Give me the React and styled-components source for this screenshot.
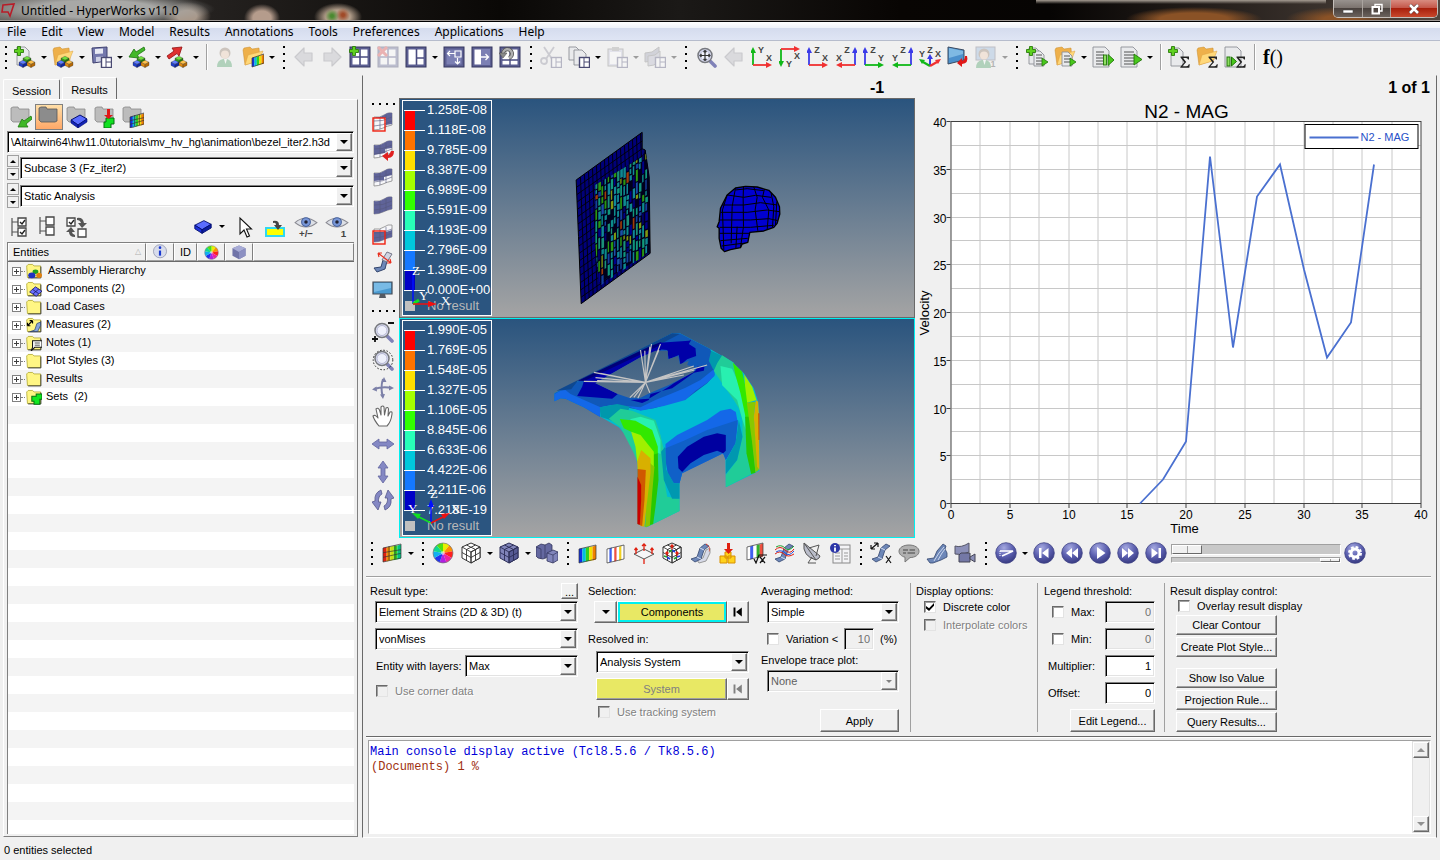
import React from "react";
import styled, { createGlobalStyle, css } from "styled-components";

const UI_FONT = `"Liberation Sans", Arial, sans-serif`;
const FACE = "#f0f0f0";

const GlobalStyle = createGlobalStyle`
  * { box-sizing: border-box; }
  body { margin: 0; background: ${FACE}; color: #000; font: 11px/14px ${UI_FONT}; }
  button, input, select { font: inherit; color: inherit; margin: 0; padding: 0; }
  ul { list-style: none; margin: 0; padding: 0; }
`;

/* ---------- shared bevels ---------- */
const raised = css`
  border: 1px solid;
  border-color: #fff #696969 #696969 #fff;
  box-shadow: inset -1px -1px 0 #a0a0a0;
`;
const sunken = css`
  border: 1px solid;
  border-color: #808080 #fff #fff #808080;
  box-shadow: inset 1px 1px 0 #000, inset -1px -1px 0 #e3e3e3;
`;

/* ---------- frame ---------- */
const Window = styled.div`
  display: flex;
  flex-direction: column;
  min-height: 100vh;
  background: ${FACE};
`;
const TitleBar = styled.header`
  display: flex;
  align-items: flex-start;
  height: 22px;
  padding: 2px 2px 0 1px;
  border-bottom: 1px solid #000;
  box-shadow: inset 0 -1px 0 #a09a96;
  background:
    radial-gradient(ellipse 120px 17px at 95px 9px, #a8a8a6 50%, transparent 100%),
    radial-gradient(ellipse 24px 14px at 187px 16px, #a8988a 40%, transparent 100%),
    radial-gradient(ellipse 18px 14px at 262px 18px, #b59c8c 50%, transparent 100%),
    radial-gradient(ellipse 7px 7px at 332px 16px, #4a8a30 20%, transparent 100%),
    radial-gradient(ellipse 7px 7px at 343px 15px, #a04a28 20%, transparent 100%),
    radial-gradient(ellipse 24px 14px at 338px 17px, #b5a08c 50%, transparent 100%),
    linear-gradient(#a59c92, transparent 4px) 1036px 0 / 290px 8px no-repeat,
    radial-gradient(ellipse 68px 12px at 1194px 19px, #8a5226 50%, transparent 100%),
    radial-gradient(ellipse 54px 12px at 1340px 19px, #8a5226 30%, transparent 100%),
    linear-gradient(90deg, #6a6864 0, #24211f 210px, #0a0806 500px, #1b1917 680px, #080503 900px, #060403 1050px, #2c2521 1250px, #51473f 100%);
`;
const AppTitle = styled.h1`
  margin: 0 0 0 4px;
  font: 12px/17px "Noto Sans", "Open Sans", sans-serif;
  flex: 1;
`;
const Caption = styled.div`
  display: flex;
  margin-top: -2px;
  border: 1px solid #c5bfba;
  border-top: 0;
  border-radius: 0 0 5px 5px;
  overflow: hidden;
`;
const CaptionButton = styled.button`
  width: ${(p) => (p.$close ? 47 : 28)}px;
  height: 17px;
  border: 0;
  border-left: ${(p) => (p.$first ? "0" : "1px solid #aaa49f")};
  display: grid;
  place-items: center;
  background: ${(p) =>
    p.$close
      ? "linear-gradient(#d88c80, #c4584a 45%, #a8200c 50%, #c8482c)"
      : "linear-gradient(#98928e, #7c746f 45%, #4a423e 50%, #6b625c)"};
`;
const MenuBar = styled.nav`
  display: flex;
  gap: 15px;
  height: 19px;
  padding: 0 7px;
  border-bottom: 1px solid #b6bccc;
  background: linear-gradient(#fff, #eef1f8 35%, #d5dcee 36%, #dfe5f4);
`;
const MenuLink = styled.a`
  color: #000;
  text-decoration: none;
  font: 12px/19px "Noto Sans", "Open Sans", sans-serif;
`;
const ToolBar = styled.div`
  display: flex;
  align-items: center;
  height: ${(p) => p.$h || 32}px;
  padding-left: ${(p) => p.$in || 0}px;
  overflow: hidden;
`;
const Grip = styled.span`
  flex: none;
  width: ${(p) => (p.$first ? 11 : 13)}px;
  height: 24px;
  background: repeating-linear-gradient(#000 0 2px, transparent 2px 7px) center / 2px 23px no-repeat;
`;
const HGrip = styled.span`
  width: 26px;
  height: ${(p) => p.$h}px;
  background: repeating-linear-gradient(90deg, #000 0 2px, transparent 2px 7px) center / 23px 2px no-repeat;
`;
const Divider = styled.span`
  flex: none;
  width: 10px;
  height: 26px;
  background: linear-gradient(90deg, #a0a0a0 1px, #fff 1px) 5px 0 / 2px 100% no-repeat;
`;
const ToolButton = styled.button`
  flex: none;
  width: 28px;
  height: 28px;
  border: 0;
  background: none;
  display: grid;
  place-items: center;
  opacity: ${(p) => (p.disabled ? 0.35 : 1)};
`;
const DropButton = styled.button`
  flex: none;
  width: 10px;
  height: 24px;
  border: 0;
  background: none;
  display: grid;
  place-items: center;
  opacity: ${(p) => (p.disabled ? 0.35 : 1)};
`;
const Caret = styled.span`
  width: 0;
  height: 0;
  border: ${(p) => p.$s || 3}px solid transparent;
  border-top-color: ${(p) => (p.$up ? "transparent" : p.$c || "#000")};
  border-bottom-color: ${(p) => (p.$up ? p.$c || "#000" : "transparent")};
  border-top-width: ${(p) => (p.$up ? 0 : p.$s || 3)}px;
  border-bottom-width: ${(p) => (p.$up ? p.$s || 3 : 0)}px;
`;
const FunctionMark = styled.span`
  font: 20px/24px "Liberation Serif", serif;
  white-space: nowrap;
  & > b { font-weight: bold; }
`;
const IconSvg = styled.svg`
  display: block;
  width: ${(p) => p.$s || 22}px;
  height: ${(p) => p.$s || 22}px;
`;
const Ico = ({ children, s }) => (
  <IconSvg viewBox="0 0 22 22" $s={s} aria-hidden="true">{children}</IconSvg>
);

/* ---------- icon parts ---------- */
const Block = ({ x, y, a, b, c }) => (
  <g transform={`translate(${x} ${y})`} stroke="#222" strokeWidth=".3">
    <path d="M0 2.2 L4 .2 L8 2.2 L4 4.4Z" fill={a} />
    <path d="M0 2.2 L4 4.4 V7.6 L0 5.4Z" fill={b} />
    <path d="M8 2.2 L4 4.4 V7.6 L8 5.4Z" fill={c} />
  </g>
);
const Blocks = () => (
  <g>
    <Block x={9} y={10} a="#6fe03c" b="#2ea012" c="#1c7d08" />
    <Block x={5} y={14} a="#5f7dff" b="#1f3fd0" c="#1027a0" />
    <Block x={13} y={14} a="#ffc04a" b="#e08a10" c="#b86a04" />
  </g>
);
const Plus = ({ x = 0, y = 0 }) => (
  <path transform={`translate(${x} ${y})`} d="M3.5 .5h3v3h3v3h-3v3h-3v-3h-3v-3h3z" fill="#5fd020" stroke="#2b7d0c" strokeWidth=".9" />
);
const Sheet = ({ x = 2, y = 1, w = 13, h = 18 }) => (
  <path d={`M${x} ${y}h${w - 4}l4 4v${h - 4}h${-w}z`} fill="#e9eaec" stroke="#8d9096" strokeWidth=".9" />
);
const Folder = () => (
  <g>
    <path d="M1 4 L2 2 L8 1 L10 3 L17 2 L18 14 L3 19Z" fill="#eeb04a" stroke="#c88a28" strokeWidth=".5" />
    <path d="M3 19 L6 9 L21 5 L17 15Z" fill="#ffd87a" stroke="#dca040" strokeWidth=".5" />
  </g>
);
const MiniPage = () => (
  <g>
    <rect x="11.5" y="11.5" width="10" height="10" fill="#fff" stroke="#4a4a72" strokeWidth="1.4" />
    <path d="M16 12v9M16 16h5" stroke="#4a4a72" fill="none" />
  </g>
);
const PageFrame = ({ children, fill = "#fff" }) => (
  <g>
    <rect x="1" y="1" width="20" height="20" fill="#5c5f92" stroke="#34365e" />
    <rect x="3.5" y="3.5" width="15" height="15" fill={fill} />
    {children}
  </g>
);
const Sigma = () => (
  <path d="M12.5 10.5h8.5v3h-1q-.3-1.6-2-1.6h-3l3.2 4-3.8 4.3h4q2 0 2.4-2h1l-.5 3.6h-9v-.9l4-4.7-3.8-4.8z" fill="#222" />
);
const Play = ({ x = 13, y = 10 }) => (
  <path d={`M${x} ${y}l8 5.5-8 5.5z`} fill="#49c81c" stroke="#22760a" strokeWidth=".9" />
);
const Lines = ({ x = 4, y = 6, w = 9, n = 4 }) => (
  <path d={Array.from({ length: n }, (_, i) => `M${x} ${y + i * 3}h${w}`).join("")} stroke="#555" strokeWidth="1.2" />
);
const BlueBox = ({ s }) => (
  <Ico s={s}>
    <path d="M2 9 L12 4 L20 8 L10 14Z" fill="#5a6cff" stroke="#000c70" />
    <path d="M2 9 L10 14 V18 L2 13Z" fill="#1c30d8" stroke="#000c70" />
    <path d="M20 8 L10 14 V18 L20 12Z" fill="#0c1ca0" stroke="#000c70" />
  </Ico>
);
const MeshCube = ({ fill = "#fff", right = "#fff", line = "#333", children }) => (
  <Ico>
    <path d="M11 1 L20 5 V16 L11 21 L2 16 V5Z" fill={fill} stroke={line} />
    <path d="M11 10 L20 5 V16 L11 21Z" fill={right} stroke={line} />
    <path d="M2 5 L11 10 L20 5 M11 10 V21 M6.5 3 L15.5 7.5 V18.5 M15.5 3 L6.5 7.5 V18.5 M2 10.5 L11 15.5 L20 10.5" fill="none" stroke={line} strokeWidth=".9" />
    {children}
  </Ico>
);
const rainbow = ["#1030e0", "#00c0e0", "#30d020", "#f0e000", "#f08000"];
const ContourFlag = ({ x = 2, y = 2, w = 18, h = 18, cols = rainbow, grid }) => {
  const bw = w / cols.length;
  return (
    <g transform={`translate(${x} ${y})`}>
      {cols.map((c, i) => {
        const t = 3 - (i / cols.length) * 3;
        return <path key={i} d={`M${i * bw} ${t + 1}L${(i + 1) * bw} ${t}V${h - 3 + t}L${i * bw} ${h - 2 + t}z`} fill={c} />;
      })}
      <path d={`M0 4L${w} 0V${h - 3}L0 ${h + 1}Z${grid ? `M0 ${h / 3 + 3}L${w} ${h / 3}M0 ${(2 * h) / 3 + 2}L${w} ${(2 * h) / 3 - 2}M${w / 3} 2V${h - 1}M${(2 * w) / 3} 1V${h - 2}` : ""}`} fill="none" stroke="#333" strokeWidth=".7" />
    </g>
  );
};
const Beam = ({ c = "#6d87b8" }) => (
  <g>
    <path d="M2 17 L8 15 L11 6 L16 2 L20 4 L15 8 L12 17 L6 20Z" fill={c} stroke="#34466e" strokeWidth=".8" />
    <path d="M8 15 L12 17 M11 6 L15 8" stroke="#dfe8fa" strokeWidth=".9" />
  </g>
);
const Lens = ({ children }) => (
  <Ico>
    <path d="M14 14 L20 20" stroke="#8082b8" strokeWidth="3.6" strokeLinecap="round" />
    <circle cx="10" cy="9.5" r="7" fill="#dcdff2" stroke="#77797f" strokeWidth="1.5" />
    <circle cx="10" cy="9.5" r="5" fill="#eef0fb" stroke="#a8aac8" strokeWidth=".8" />
    {children}
  </Ico>
);
const ColorWheel = ({ s }) => (
  <Ico s={s}>
    {["#e8f000", "#ff9000", "#ff2020", "#f020a0", "#b020e0", "#2030f0", "#10b0f0", "#10d890", "#50e010"].map((c, i) => {
      const a = ((i * 40 - 90) * Math.PI) / 180;
      const b = (((i + 1) * 40 - 90) * Math.PI) / 180;
      return <path key={c} d={`M11 11L${11 + 10 * Math.cos(a)} ${11 + 10 * Math.sin(a)}A10 10 0 0 1 ${11 + 10 * Math.cos(b)} ${11 + 10 * Math.sin(b)}Z`} fill={c} />;
    })}
    <circle cx="11" cy="11" r="10" fill="none" stroke="#777" strokeWidth=".7" />
    <circle cx="11" cy="11" r="2" fill="#fff" opacity=".5" />
  </Ico>
);
const FatArrow = ({ right }) => (
  <Ico>
    <path transform={right ? "translate(22 0) scale(-1 1)" : undefined} d="M2 11 L11 2 V7 H19 V15 H11 V20Z" fill="#b4b4bc" stroke="#85858f" strokeWidth="1.2" strokeLinejoin="round" />
  </Ico>
);
const RED = "#f03030", GREEN = "#10b818", BLUE = "#3a3ae8";
const AxisText = styled.text`
  font: bold 9px "Liberation Sans", Arial, sans-serif;
  text-anchor: middle;
  fill: #444;
`;
const AxisIcon = ({ right, top, vc, hc, vl, hl }) => {
  const cx = right ? 20 : 2, cy = top ? 3 : 19;
  const ex = right ? 2 : 20, ey = top ? 20 : 2;
  const sx = right ? 1 : -1, sy = top ? -1 : 1;
  return (
    <Ico>
      <path d={`M${cx} ${cy}V${ey + 3 * sy}`} stroke={vc} strokeWidth="1.8" />
      <path d={`M${cx} ${ey - sy}l3 ${6 * sy}h-6z`} fill={vc} />
      <path d={`M${cx} ${cy}H${ex + 3 * sx}`} stroke={hc} strokeWidth="1.8" />
      <path d={`M${ex - sx} ${cy}l${6 * sx} -3v6z`} fill={hc} />
      <AxisText x={right ? 12 : 10} y={top ? 21 : 7}>{vl}</AxisText>
      <AxisText x={right ? 4 : 18} y={top ? 13 : 15}>{hl}</AxisText>
    </Ico>
  );
};
const Screen = ({ children }) => (
  <Ico>
    <path d="M1 3 L20 3 V15 H1Z" fill="#4a9ad0" stroke="#444a55" strokeWidth="1.2" />
    <path d="M2 4h17v5L2 13z" fill="#8cc8ee" opacity=".7" />
    <path d="M8 15h5l1 4H7z" fill="#555a62" />
    {children}
  </Ico>
);
const Person = ({ x = 0, y = 0 }) => (
  <g transform={`translate(${x} ${y})`}>
    <path d="M3 21 Q3 14 9 13 L13 13 Q18 14 18 21Z" fill="#3f9a5c" />
    <circle cx="11" cy="7" r="5.5" fill="#8a7460" />
    <circle cx="11" cy="8.5" r="4" fill="#f0cdb0" />
    <path d="M10 13l1.500 5 1.500-5z" fill="#fff" />
  </g>
);
const icons = {
  newModel: <Ico><Sheet x={3} w={12} h={18} /><Plus /><Blocks /></Ico>,
  open: <Ico><Folder /><Blocks /></Ico>,
  save: <Ico><path d="M2 2 L17 1 V15 L3 17Z" fill="#7478ac" stroke="#3f4170" /><path d="M5 3l8-.6v5L5 8z" fill="#e8eaf4" /><path d="M6 11l7-.6V15l-7 1z" fill="#cfd2e6" /><MiniPage /></Ico>,
  importM: <Ico><path d="M16 1 L8 6 L6 3 L1 11 L11 12 L9.5 9 L17 4Z" fill="#43b82a" stroke="#1d7510" strokeWidth=".8" /><Blocks /></Ico>,
  exportM: <Ico><path d="M1 10 L8 5 L6 2 L16 1 L13 10 L11 7.5 L3 13Z" fill="#e03030" stroke="#901010" strokeWidth=".8" /><Blocks /></Ico>,
  person: <Ico><Person /></Ico>,
  folderContour: <Ico><Folder /><ContourFlag x={10} y={8} w={12} h={12} /></Ico>,
  left: <FatArrow />,
  right: <FatArrow right />,
  addPage: <Ico><PageFrame><path d="M11 3v16M3 11h16" stroke="#4a4c80" strokeWidth="1.6" /></PageFrame><Plus /></Ico>,
  delPage: <Ico><PageFrame><path d="M11 3v16M3 11h16" stroke="#4a4c80" strokeWidth="1.6" /></PageFrame><path d="M1 1l9 9M10 1l-9 9" stroke="#e04040" strokeWidth="3" /></Ico>,
  layout: <Ico><PageFrame><path d="M11.5 3v16M11 12h8" stroke="#4a4c80" strokeWidth="1.6" /></PageFrame></Ico>,
  swap: <Ico><PageFrame fill="#7c80b4"><path d="M5 7.5h7M7 5l-2.5 2.5L7 10M14.5 12v6M12 15.5l2.5 2.5 2.5-2.5M12 5h6v6h-6z" fill="none" stroke="#fff" strokeWidth="1.2" /></PageFrame></Ico>,
  expand: <Ico><PageFrame><rect x="10" y="3" width="9" height="16" fill="#7c80b4" /><path d="M10 11h7M14.5 8l3 3-3 3" fill="none" stroke="#fff" strokeWidth="1.3" /></PageFrame></Ico>,
  sync: <Ico><PageFrame><path d="M11 3v16M3 14h16" stroke="#4a4c80" strokeWidth="1.4" /></PageFrame><path d="M4 8a4.500 4.500 0 1 1 6 4" fill="none" stroke="#555" strokeWidth="4" /><path d="M4 8a4.500 4.500 0 1 1 6 4" fill="none" stroke="#b0b0b0" strokeWidth="2.4" /><path d="M0 7h8l-4 5z" fill="#8a8a8a" stroke="#555" strokeWidth=".6" /></Ico>,
  cut: <Ico><path d="M4 1l8 12M14 1L6 13" stroke="#889" strokeWidth="1.8" /><circle cx="4" cy="15" r="3" fill="none" stroke="#889" strokeWidth="1.8" /><MiniPage /></Ico>,
  copy: <Ico><Sheet x={1} y={1} w={11} h={13} /><Sheet x={6} y={4} w={12} h={15} /><MiniPage /></Ico>,
  paste: <Ico><rect x="2" y="3" width="15" height="17" fill="#c9cbe0" stroke="#777" /><rect x="4" y="6" width="11" height="12" fill="#fff" /><rect x="6" y="1" width="7" height="4" fill="#999" /><MiniPage /></Ico>,
  overlay: <Ico><path d="M1 7l7-1 7-5v9l-7 5-7 1z" fill="#999cb0" stroke="#777" /><path d="M4 10l7-1 5-4v9l-6 5-6 1z" fill="#b2b4c6" stroke="#777" /><MiniPage /></Ico>,
  fit: <Lens><path d="M10 4.5v10M5 9.500h10M8.500 6l1.500-1.500L11.500 6M8.500 13l1.500 1.500 1.500-1.500M6.500 8L5 9.500 6.500 11M13.500 8l1.500 1.500-1.500 1.500" stroke="#333" fill="none" strokeWidth="1.2" /></Lens>,
  iso: <Ico><path d="M11 19V11" stroke={BLUE} strokeWidth="2" /><path d="M11 8l3 5H8z" fill={BLUE} /><path d="M11 20L4 16" stroke={GREEN} strokeWidth="2.2" /><path d="M0 13l6 1-3 4z" fill={GREEN} /><path d="M11 20L18 16" stroke={RED} strokeWidth="2.2" /><path d="M22 13l-6 1 3 4z" fill={RED} /><AxisText x={3} y={11}>Y</AxisText><AxisText x={11} y={7}>Z</AxisText><AxisText x={19} y={11}>X</AxisText></Ico>,
  reverse: <Ico><path d="M1 1 L17 4 V14 L1 18Z" fill="#4c90cc" stroke="#3a4a60" /><path d="M2 2l14 3v3L2 12z" fill="#96caec" opacity=".7" /><path d="M20 10q2 7-5 8v3l-5-4 5-5v3q3-1 3-5z" fill="#e01818" /></Ico>,
  userView: <Ico><rect x="1" y="1" width="19" height="13" fill="#8fb4dc" stroke="#667" /><Person x={-2} y={1} /><AxisText x={18} y={21}>1</AxisText></Ico>,
  addReport: <Ico><Sheet x={3} y={2} w={11} h={16} /><Sheet x={8} y={5} w={10} h={15} /><Lines x={10} y={9} w={6} /><Plus /><path d="M16 12l6 4-6 4z" fill="#49c81c" stroke="#22760a" strokeWidth=".8" /></Ico>,
  openReport: <Ico><Folder /><Sheet x={8} y={6} w={10} h={14} /><Lines x={10} y={10} w={6} n={3} /><path d="M16 12l6 4-6 4z" fill="#49c81c" stroke="#22760a" strokeWidth=".8" /></Ico>,
  runReport: <Ico><Sheet x={1} y={1} w={16} h={20} /><Lines x={4} y={6} w={8} n={5} /><rect x="11.5" y="9" width="3" height="10" fill="#8ee060" stroke="#22760a" strokeWidth=".9" /><path d="M16 8.5l6 5.500-6 5.500z" fill="#49c81c" stroke="#22760a" strokeWidth=".9" /></Ico>,
  playReport: <Ico><Sheet x={1} y={1} w={16} h={20} /><Lines x={4} y={6} w={10} n={5} /><Play x={14} y={8} /></Ico>,
  addSum: <Ico><Sheet x={3} y={2} w={12} h={18} /><Plus /><Sigma /></Ico>,
  openSum: <Ico><Folder /><Sigma /></Ico>,
  runSum: <Ico><Sheet x={1} y={1} w={16} h={20} /><rect x="3" y="11" width="3" height="9" fill="#8ee060" stroke="#22760a" /><path d="M7.5 11l5 4.500-5 4.500z" fill="#49c81c" stroke="#22760a" /><Sigma /></Ico>,
};

/* mesh patches used by the mask tools */
const Patch = ({ dark, box, boxLow, children }) => (
  <Ico>
    <path d="M2 6 Q8 7 12 4 T20 2 V14 Q15 15 11 17 T2 19Z" fill="#f7f7fa" stroke="#888" strokeWidth=".8" />
    <path d={dark} fill="#5f6398" />
    <path d="M2 10 Q10 11 20 6 M2 15 Q10 15 20 10 M8 6 V18 M14 4 V16" fill="none" stroke="#55587c" strokeWidth=".6" />
    {box && <rect x="1" y={boxLow ? 8 : 7} width="12" height="13" fill="none" stroke="#f02010" strokeWidth="1.4" />}
    {children}
  </Ico>
);
const sideTop = [
  ["Mask", <Patch box dark="M3 6 Q8 7 12 4 T20 2 V13 L14 14 V7 H4Z" />],
  ["Mask by selection", <Patch dark="M2 6 Q8 7 12 4 T20 2 V9 L13 10 V14 L2 16Z"><path d="M22 12q0 7-6 7v3l-6-5 6-4v3q2-1 3-4z" fill="#e02020" /></Patch>],
  ["Reverse mask", <Patch dark="M2 6 Q8 7 12 4 T20 2 V8 L12 10 V13 L2 14Z" />],
  ["Mask all", <Patch dark="M2 6 Q8 7 12 4 T20 2 V14 Q15 15 11 17 T2 19Z" />],
  ["Unmask region", <Patch box boxLow dark="M2 9 L14 9 L20 7 V14 Q15 15 11 17 T2 19Z" />],
  ["Measure", <Ico><path d="M2 17 L9 16 L11 9 L15 10 L13 18 L5 21Z" fill="#6d87b8" stroke="#34466e" /><path d="M10 9 L15 1 L20 3 L15 11Z" fill="#d0d4e2" stroke="#778" /><path d="M6 2 L19 12 M6 2l1 4M6 2l4 0M19 12l-4 0M19 12l-1-4" stroke="#e83020" fill="none" strokeWidth="1.2" /></Ico>],
  ["Display", <Screen />],
];
const BI = "#8488c4";
const sideBottom = [
  ["Zoom in or out", <Lens><path d="M16 2h6M0 18h6M3 15v6" stroke="#111" strokeWidth="1.8" /></Lens>],
  ["Circle zoom", <Lens><circle cx="11" cy="11" r="9.8" fill="none" stroke="#222" strokeDasharray="1.5 1.8" /></Lens>],
  ["Rotate", <Ico><path d="M11 2 Q8 11 11 20 M2 12 Q11 9 20 11" stroke="#7c80a8" strokeWidth="2" fill="none" /><path d="M12 0l2.500 5h-5zM11 22l-3-4.500 5-.5zM0 12.500l4.500-3 .5 5zM22 11l-5-2.500v5z" fill="#7c80a8" /></Ico>],
  ["Pan", <Ico><path d="M7 21 Q2 15 1 11 Q3 9 6 13 L4 4 Q6 2 7.500 5 L9 10 L9 2 Q11 0 12 2 L12.500 10 L14 3 Q16 1.500 16.500 4 L16 11 L18 7 Q20.500 6 20 9 Q19 17 15 21Z" fill="#fff" stroke="#666" strokeWidth="1.1" strokeLinejoin="round" /></Ico>],
  ["Pan horizontally", <Ico><path d="M0 11 L7 6 V9 H15 V6 L22 11 L15 16 V13 H7 V16Z" fill={BI} stroke="#6266a0" strokeWidth=".8" /></Ico>],
  ["Pan vertically", <Ico><path d="M11 0 L16 7 H13 V15 H16 L11 22 L6 15 H9 V7 H6Z" fill={BI} stroke="#6266a0" strokeWidth=".8" /></Ico>],
  ["Spin", <Ico><path d="M9 1 Q2 4 3 12 L0 13 L6 21 L9 13 L6.500 13 Q6 7 10 5Z" fill={BI} stroke="#55588c" strokeWidth=".8" /><path d="M13 21 Q20 18 19 10 L22 9 L16 1 L13 9 L15.500 9 Q16 15 12 17Z" fill={BI} stroke="#55588c" strokeWidth=".8" /></Ico>],
];
const Ball = ({ children }) => (
  <Ico>
    <defs>
      <radialGradient id="ball" cx=".4" cy=".25" r=".8">
        <stop offset="0" stopColor="#a4a8e0" /><stop offset=".55" stopColor="#5a5eae" /><stop offset="1" stopColor="#34377c" />
      </radialGradient>
    </defs>
    <circle cx="11" cy="11" r="10.3" fill="url(#ball)" stroke="#3f4286" strokeWidth=".8" />
    {children}
  </Ico>
);
const lower = {
  contourSet: <Ico><ContourFlag x={2} y={2} w={18} h={17} cols={["#e02010", "#f09000", "#c8e010", "#30d020", "#00c080"]} grid /></Ico>,
  wheel: <ColorWheel />,
  wire: <MeshCube />,
  solid: <MeshCube fill="#8084ba" right="#565a94" line="#2c2f58" />,
  parts: <Ico><path d="M0 5l5-3 4 1 4-2 3 2v10l-5 2-4 2-5-1-2-2z" fill="#6468a0" stroke="#33365e" strokeWidth=".8" /><path d="M9 3v14M0 5l5 2v10" stroke="#33365e" fill="none" strokeWidth=".7" /><path d="M11 11l6-3 5 2v8l-5 3-6-2z" fill="#8084ba" stroke="#33365e" strokeWidth=".8" /><path d="M11 11l6 2 5-3M17 13v8" stroke="#33365e" fill="none" strokeWidth=".7" /></Ico>,
  contour: <Ico><ContourFlag x={2} y={3} w={17} h={17} /></Ico>,
  vector: <Ico><ContourFlag x={2} y={3} w={17} h={17} cols={["#fff", "#4060f0", "#fff", "#f05040", "#fff", "#f0d020", "#fff"]} /></Ico>,
  tensor: <Ico><path d="M1 12 L11 7 L21 12 L11 17Z" fill="#f6f6f8" stroke="#555" /><path d="M11 9V2M9 4l2-2 2 2M3 12V6M1.500 8L3 6l1.500 2M19 12V6M17.500 8L19 6l1.500 2M11 17v5" stroke="#e02010" strokeWidth="1.3" fill="none" /></Ico>,
  tensorCube: <MeshCube><path d="M11 8V3M9.500 4.500L11 3l1.500 1.500M6 15v-5M16 15v-5M4.500 11.500L6 10l1.500 1.500M14.500 11.500L16 10l1.500 1.500" stroke="#e02010" strokeWidth="1.3" fill="none" /><path d="M11 8l3 2M6 15l3 2M16 15l3-1" stroke="#2040e0" strokeWidth="1.6" /><path d="M11 8l-3 2M6 15l-3-1M16 15l-3 2" stroke="#20a030" strokeWidth="1.6" /></MeshCube>,
  deformed: <Ico><path d="M8 18 L14 16 L17 8 L21 6 V11 L17 19 L10 21Z" fill="#d7dae8" stroke="#999" /><Beam /><path d="M17 2q5 3 3 8" stroke="#e03020" fill="none" strokeDasharray="2 1" /></Ico>,
  iso: <Ico><path d="M8 10h6v6H8zM3 14h7v7H3zM11 14h7v7h-7z" fill="#ffd21c" stroke="#d89000" /><path d="M10 1h3v6h3l-4.500 5L7 7h3z" fill="#e02010" /></Ico>,
  derived: <Ico><ContourFlag x={2} y={1} w={16} h={16} cols={["#fff", "#4060f0", "#fff", "#30b030", "#f05040"]} /><path d="M9 17l2 4 3-8h8M15 15l5 6M20 15l-5 6" stroke="#111" fill="none" strokeWidth="1.2" /></Ico>,
  stream: <Ico><Beam /><path d="M2 8q5-5 10 0t9-1M2 12q5-4 9 0t10 0" stroke="#e02010" fill="none" /><path d="M3 5q5-3 9 1t9-2" stroke="#20a030" fill="none" /><path d="M3 10q5-3 9 1t9-2" stroke="#2050e0" fill="none" /></Ico>,
  track: <Ico><path d="M3 1 Q1 14 15 18 Q19 16 19 14Z" fill="#babdca" stroke="#555" /><path d="M3 1L15 18M8 6l10-3-3 11M11 15l-4 6h8" stroke="#555" fill="none" /></Ico>,
  info: <Ico><rect x="4" y="3" width="17" height="18" fill="#f4f4f6" stroke="#888" /><path d="M4 7h17M13 7v14M6 11h5M6 14h5M6 17h5M15 11h4M15 14h4M15 17h4" stroke="#999" /><circle cx="6" cy="6" r="5" fill="#2c36a8" /><path d="M6 3v1.200M6 5.500v4" stroke="#fff" strokeWidth="1.8" /></Ico>,
  measures: <Ico><Beam /><path d="M1 7L8 1M1 7V3M1 7h4M8 1H4M8 1v4M16 14l5 7M21 14l-5 7" stroke="#111" fill="none" strokeWidth="1.2" /></Ico>,
  note: <Ico><path d="M11 3c5.500 0 10 2.600 10 6.300s-4 6.200-9 6.300L7 20v-4.800C3.500 14.300 1 12 1 9.300 1 5.600 5.500 3 11 3z" fill="#b0b0b0" stroke="#777" /><path d="M5 8h5m1.500 0H17M5 11h3m1.500 0H17" stroke="#444" strokeWidth="1.2" /></Ico>,
  sweep: <Ico><path d="M1 17l7-1 3-7 6-7 3 2-1 3 2 4v4l-6 3-8 3H4z" fill="#6d87b8" stroke="#34466e" strokeWidth=".8" /><path d="M8 19l5-8 5-6M12 18l4-7 3-4" stroke="#cdd9f0" fill="none" /></Ico>,
  camera: <Ico><path d="M1 4q6 2 14-3v9q-7 4-14 2z" fill="#8c90b8" stroke="#556" /><path d="M7 11h9v9H5v-7z" fill="#7478a6" stroke="#445" /><path d="M16 15l5-3v8l-5-3z" fill="#8c90b8" stroke="#445" /></Ico>,
  anim: <Ball><path d="M5 9h13L7 14" stroke="#fff" fill="none" strokeWidth="1.6" /><path d="M5 9v5" stroke="#fff" strokeDasharray="1 1" /></Ball>,
  first: <Ball><path d="M6 6h2.500v10H6zM15.500 6v10L9 11z" fill="#fff" /></Ball>,
  back: <Ball><path d="M11 6v10L5 11zM17 6v10l-6-5z" fill="#fff" /></Ball>,
  play: <Ball><path d="M8 5l8.500 6L8 17z" fill="#fff" /></Ball>,
  fwd: <Ball><path d="M11 6v10l6-5zM5 6v10l6-5z" fill="#fff" /></Ball>,
  last: <Ball><path d="M13.500 6H16v10h-2.500zM6.500 6v10l6.500-5z" fill="#fff" /></Ball>,
  gear: <Ball><circle cx="11" cy="11" r="4" fill="none" stroke="#fff" strokeWidth="3" /><circle cx="11" cy="11" r="6" fill="none" stroke="#fff" strokeWidth="2" strokeDasharray="2.7 2" /></Ball>,
};

const Tool = ({ label, icon, drop, disabled }) => (
  <>
    <ToolButton type="button" aria-label={label} disabled={disabled}>{icon}</ToolButton>
    {drop && (
      <DropButton type="button" aria-label={`${label} options`} disabled={disabled}><Caret /></DropButton>
    )}
  </>
);

/* ---------- form controls ---------- */
const Button = styled.button`
  ${raised}
  background: ${FACE};
  height: ${(p) => p.$h || 20}px;
  width: ${(p) => p.$w}px;
  display: grid;
  place-items: center;
  text-align: center;
  color: ${(p) => (p.disabled ? "#808080" : "#000")};
`;
const YellowButton = styled(Button)`
  flex: 1;
  background: #e8e864;
  outline: ${(p) => (p.$active ? "2px solid #00f0f0" : "none")};
  outline-offset: -3px;
`;
const ComboShell = styled.span`
  ${sunken}
  display: grid;
  flex: ${(p) => (p.$w ? "none" : "1 1 auto")};
  width: ${(p) => (p.$w ? `${p.$w}px` : "auto")};
  height: 22px;
  padding: 1px;
  background: ${(p) => (p.$off ? FACE : "#fff")};
  min-width: 0;
  & > * { grid-area: 1 / 1; }
`;
const ComboSelect = styled.select`
  appearance: none;
  border: 0;
  background: none;
  width: 100%;
  height: 18px;
  padding: 0 16px 0 2px;
  color: ${(p) => (p.disabled ? "#606060" : "#000")};
  opacity: 1;
`;
const ComboArrow = styled.span`
  ${raised}
  justify-self: end;
  width: 16px;
  background: ${FACE};
  display: grid;
  place-items: center;
  pointer-events: none;
`;
const Combo = ({ value, label, id, off, w }) => (
  <ComboShell $off={off} $w={w}>
    <ComboSelect id={id} aria-label={label} disabled={off} defaultValue={value}>
      <option>{value}</option>
    </ComboSelect>
    <ComboArrow><Caret $s={off ? 3 : 4} $c={off ? "#808080" : "#000"} /></ComboArrow>
  </ComboShell>
);
const NumberBox = styled.input`
  ${sunken}
  width: ${(p) => p.$w || 50}px;
  height: 22px;
  padding: 0 3px;
  text-align: right;
  border-radius: 0;
  background: ${(p) => (p.disabled ? FACE : "#fff")};
  color: ${(p) => (p.disabled ? "#707070" : "#000")};
`;
const CheckLabel = styled.label`
  display: flex;
  align-items: center;
  gap: 7px;
  height: ${(p) => p.$h || 18}px;
  padding-left: ${(p) => p.$in || 0}px;
  color: ${(p) => (p.$off ? "#808080" : "#000")};
  text-shadow: ${(p) => (p.$off ? "1px 1px 0 #fff" : "none")};
`;
const CheckBox = styled.input.attrs({ type: "checkbox" })`
  appearance: none;
  width: 12px;
  height: 12px;
  flex: none;
  border: 1px solid;
  border-color: #696969 #e3e3e3 #e3e3e3 #696969;
  box-shadow: inset 1px 1px 0 #a0a0a0;
  background: ${(p) => (p.disabled ? FACE : "#fff")};
  display: grid;
  place-items: center;
  &:checked::before {
    content: "";
    width: 8px;
    height: 8px;
    background: #000;
    clip-path: polygon(0 38%, 38% 65%, 100% 0, 100% 35%, 38% 100%, 0 70%);
  }
`;

/* ---------- left browser ---------- */
const Workspace = styled.div`
  display: flex;
  flex: 1;
  min-height: 0;
`;
const Browser = styled.aside`
  width: 362px;
  flex: none;
  display: flex;
  flex-direction: column;
  padding: 4px 4px 1px 3px;
`;
const Tabs = styled.div`
  display: flex;
  align-items: flex-end;
  gap: 2px;
  height: 22px;
`;
const Tab = styled.button`
  height: ${(p) => (p.$on ? 22 : 20)}px;
  padding: 3px 8px 0;
  border: 1px solid;
  border-color: #fff #696969 transparent #fff;
  border-bottom: 0;
  border-radius: 2px 2px 0 0;
  background: ${FACE};
`;
const BrowserPane = styled.div`
  flex: 1;
  display: flex;
  flex-direction: column;
  border: 1px solid;
  border-color: #fff #808080 #808080 #fff;
  padding: 2px 3px;
`;
const IconRow = styled.div`
  display: flex;
  align-items: center;
  height: ${(p) => p.$h}px;
  padding-right: 3px;
  justify-content: space-between;
`;
const Group = styled.div`
  display: flex;
  align-items: center;
  gap: ${(p) => p.$gap || 0}px;
`;
const ModeButton = styled(ToolButton)`
  height: 26px;
  border: ${(p) => (p.$on ? "1px solid #808080" : "0")};
  background: ${(p) => (p.$on ? "linear-gradient(#ffdfa8, #ffa868)" : "none")};
`;
const PickRow = styled.div`
  display: flex;
  align-items: center;
  gap: 1px;
  margin-bottom: ${(p) => p.$mb || 0}px;
`;
const Spinner = styled.span`
  display: flex;
  flex-direction: column;
  gap: 1px;
`;
const SpinButton = styled.button`
  width: 12px;
  height: 12px;
  border: 1px solid #a0a0a0;
  background: ${FACE};
  display: grid;
  place-items: center;
`;
const TreeBox = styled.div`
  flex: 1;
  display: flex;
  flex-direction: column;
  border-left: 1px solid #808080;
  border-top: 1px solid #808080;
`;
const TreeHead = styled.div`
  display: flex;
  height: 19px;
  border-bottom: 1px solid #696969;
`;
const HeadCell = styled.button`
  border: 1px solid;
  border-color: #fff #808080 #a0a0a0 #fff;
  background: ${FACE};
  width: ${(p) => p.$w || 26}px;
  flex: ${(p) => (p.$grow ? 1 : "none")};
  padding: 0 ${(p) => (p.$pad ? 4 : 0)}px;
  display: flex;
  align-items: center;
  justify-content: ${(p) => (p.$pad ? "space-between" : "center")};
  color: #000;
`;
const SortMark = styled.span`
  color: #b0b0b0;
  font-size: 8px;
`;
const Tree = styled.ul`
  flex: 1;
  background: repeating-linear-gradient(#f4f4f4 0 18px, #fff 18px 36px);
`;
const TreeRow = styled.li`
  display: flex;
  align-items: center;
  height: 18px;
  padding-left: 4px;
`;
const TreeToggle = styled.button`
  width: 9px;
  height: 9px;
  border: 1px solid #808080;
  background: linear-gradient(#404040, #404040) center / 5px 1px no-repeat,
    linear-gradient(#404040, #404040) center / 1px 5px no-repeat, #fff;
`;
const Twig = styled.span`
  width: 4px;
  border-top: 1px dotted #808080;
  margin-right: 1px;
`;
const TreeText = styled.span`
  margin-left: ${(p) => (p.$wide ? 6 : 4)}px;
  white-space: pre;
  padding-bottom: 2px;
`;
const YellowFolder = ({ children }) => (
  <Ico s={16}>
    <path d="M1 6V4l2-2h6l2 2h9v16H2z" fill="#fff684" stroke="#a8a020" />
    <path d="M20.500 5v15.500H3" fill="none" stroke="#333" strokeWidth="1.2" />
    {children}
  </Ico>
);
const treeItems = [
  ["Assembly Hierarchy", <YellowFolder><ellipse cx="13" cy="12" rx="4" ry="3" fill="#20a020" /><ellipse cx="8" cy="17" rx="5" ry="4" fill="#2030c0" /><ellipse cx="18" cy="17" rx="4" ry="3.5" fill="#e08010" /></YellowFolder>],
  ["Components (2)", <YellowFolder><path d="M5 15l8-7 9 6-8 7z" fill="#6a70ff" stroke="#101050" /><path d="M9 11.500l8.500 6M9.500 18l8-7" stroke="#101050" /></YellowFolder>],
  ["Load Cases", <YellowFolder />],
  ["Measures (2)", <YellowFolder><path d="M6 20l6-2 3-9 5-2v5l-4 8z" fill="#86a4dc" stroke="#28406c" /><path d="M2 12l7-7M2 12V8m0 4h4M9 5H5m4 0v4" stroke="#000" strokeWidth="1.6" /></YellowFolder>],
  ["Notes (1)", <YellowFolder><path d="M9 8h13v9H12l-5 5 2-5z" fill="#fff" stroke="#111" strokeWidth="1.4" /><path d="M12 11h7M12 14h7" stroke="#111" /></YellowFolder>],
  ["Plot Styles (3)", <YellowFolder />],
  ["Results", <YellowFolder />],
  ["Sets  (2)", <YellowFolder><path d="M14 7h8v7h-3v7h-8v-4H8v-7h6z" fill="#10e820" stroke="#067010" strokeWidth="1.4" /></YellowFolder>],
];
const GrayFolder = ({ dark }) => (
  <path d="M1 5V2l2-1h5l1 2h10v12l-2 1H3L1 14z" fill={dark ? "#8c8c8c" : "#bcbcbc"} stroke={dark ? "#555" : "#888"} strokeWidth=".8" />
);
const modes = [
  ["Load results", <Ico><GrayFolder /><path d="M21 10l-7 5-2-2-4 8 10 0-2-3 6-5z" fill="#40b828" stroke="#207810" strokeWidth=".8" /></Ico>],
  ["Browser", <Ico><GrayFolder dark /></Ico>],
  ["Component view", <Ico><GrayFolder /><path d="M5 14l9-5 7 4-9 6z" fill="#5a6cff" stroke="#000c70" /><path d="M5 14l7 5v3l-7-5zM21 13l-9 6v3l9-6z" fill="#1424b8" stroke="#000c70" strokeWidth=".6" /></Ico>],
  ["Set view", <Ico><GrayFolder /><path d="M12 12h8v6h-3v4h-7v-6h2z" fill="#10e020" stroke="#067010" /><path d="M13 3h3v6h3l-4.500 4L10 9h3z" fill="#e01818" /></Ico>],
  ["Contour view", <Ico><GrayFolder /><ContourFlag x={8} y={7} w={14} h={14} grid /></Ico>],
];
const EyeIcon = ({ text }) => (
  <Ico s={24}>
    <path d="M1 7Q10-1 21 7Q11 15 1 7z" fill="#dcdfe6" stroke="#8a8a92" />
    <circle cx="11" cy="6.500" r="4" fill="#7897d8" stroke="#48629c" />
    <circle cx="11" cy="6.500" r="1.600" fill="#223" />
    <AxisText x={text === "1" ? 17 : 11} y={20}>{text}</AxisText>
  </Ico>
);

/* ---------- graphics area ---------- */
const Main = styled.main`
  flex: 1;
  min-width: 0;
  display: flex;
  flex-direction: column;
  margin: 2px 3px 0 0;
  border: 1px solid;
  border-color: transparent #696969 #fff #696969;
`;
const PageHeader = styled.div`
  display: flex;
  justify-content: space-between;
  height: 22px;
  padding: 2px 6px 0 507px;
  font: bold 16px/20px "Liberation Sans", Arial, sans-serif;
`;
const Graphics = styled.div`
  display: flex;
  min-height: 440px;
`;
const SideBar = styled.div`
  width: 36px;
  flex: none;
  display: flex;
  flex-direction: column;
  align-items: center;
  padding: 2px 0 0 4px;
`;
const Panes = styled.div`
  flex: 1;
  display: grid;
  grid-template-columns: 1fr 1fr;
  padding-right: 5px;
`;
const ViewColumn = styled.div`
  display: grid;
  grid-template-rows: 1fr 1fr;
`;
const Viewport = styled.section`
  display: grid;
  min-width: 0;
  border: 1px solid ${(p) => (p.$active ? "#00f0f0" : "#696969")};
  background: linear-gradient(#2a547e, #a4a4a4);
  & > * { grid-area: 1 / 1; }
`;
const Scene = styled.svg`
  width: 100%;
  height: 218px;
  display: block;
`;
const Legend = styled.div`
  align-self: start;
  display: grid;
  width: 90px;
  height: 216px;
  margin: 1px 0 0 2px;
  padding-left: 1px;
  border: 1px solid #fff;
  background: #2b5580;
  font: 13px/20px "Liberation Sans", Arial, sans-serif;
  color: #fff;
  grid-template-rows: 199px 14px;
`;
const LegendBar = styled.div`
  grid-area: 1 / 1;
  display: flex;
  flex-direction: column;
  padding: 9px 0 0 1px;
`;
const LegendBand = styled.span`
  width: 10px;
  height: 20px;
  background: ${(p) => p.$c};
`;
const LegendList = styled.ul`
  grid-area: 1 / 1;
  margin-top: -1px;
`;
const LegendItem = styled.li`
  display: flex;
  align-items: center;
  gap: 2px;
  height: 20px;
  &::before {
    content: "";
    width: 21px;
    height: 1px;
    background: #fff;
  }
`;
const NoResult = styled.div`
  grid-area: 2 / 1;
  display: flex;
  align-items: center;
  gap: 12px;
  height: 12px;
  color: #b8b8b8;
  padding-left: 1px;
  &::before {
    content: "";
    width: 10px;
    height: 10px;
    background: #c0c0c0;
  }
`;
const Triad = styled.svg`
  width: 90px;
  height: 218px;
  pointer-events: none;
`;
const TriadText = styled.text`
  font: 13px "Liberation Serif", serif;
  fill: #fff;
`;
const bands = ["#ff0000", "#ff7300", "#ffe000", "#a4ff00", "#32ff00", "#28ffb8", "#00c8dc", "#1478ff", "#0000c8"];
const ViewLegend = ({ values }) => (
  <Legend>
    <LegendBar>{bands.map((c) => <LegendBand key={c} $c={c} />)}</LegendBar>
    <LegendList>{values.map((v) => <LegendItem key={v}>{v}</LegendItem>)}</LegendList>
    <NoResult>No result</NoResult>
  </Legend>
);

function lcg(seed) {
  let s = seed;
  return () => {
    s = (s * 1664525 + 1013904223) % 4294967296;
    return s / 4294967296;
  };
}
const bezelCells = (() => {
  const rnd = lcg(7);
  const pal = ["#108898", "#10987c", "#1a50a8", "#000088", "#0e8890", "#2a9810", "#14409c", "#000070", "#0c8c8c", "#809810", "#1a9078"];
  const out = [];
  for (let c = 0; c < 17; c++) {
    const x = 104 + c * 9.4;
    const top = 222 - c * 5.6;
    for (let y = top; y < top + 295; ) {
      const h = 14 + rnd() * 26;
      const r = rnd();
      if (r > 0.1) out.push({ x, y, w: 4 + rnd() * 4, h: h - 4, c: r > 0.975 ? "#a03c08" : pal[Math.floor(rnd() * pal.length)] });
      y += h;
    }
  }
  return out;
})();

const BezelScene = () => {
  const grid = [];
  for (let i = 1; i < 18; i++) grid.push(`M${48 + i * 12} ${210 - i * 8.7}L${62 + i * 12} ${581 - i * 8.7}`);
  for (let i = 1; i < 17; i++) grid.push(`M${47 + i * 0.9} ${210 + i * 22}L${254 + i} ${64 + i * 22}`);
  return (
    <Scene viewBox="400 99 513 218" role="img" aria-label="Bezel and head form mesh">
      <defs>
        <clipPath id="bezelClip"><path d="M104 225L246 140L254 120L266 200L269 425L115 530L104 400Z" /></clipPath>
        <clipPath id="bezelEdge"><path d="M47 210L245 67V116L254 120L266 200L269 430L62 581L54 380Z" /></clipPath>
      </defs>
      <g transform="translate(560 110) scale(.3333)">
        <path d="M47 210L245 67V116L254 120L266 200L269 430L62 581L54 380Z" fill="#000078" stroke="#000" strokeWidth="3" />
        <path d={grid.join("")} stroke="#000" strokeWidth="2.6" clipPath="url(#bezelEdge)" />
        <path d="M104 240L120 215L246 140L254 120L266 200L269 425L115 520L104 400Z" fill="#00001c" />
        <g clipPath="url(#bezelClip)">
          {bezelCells.map((k, i) => (
            <path key={i} d={`M${k.x} ${k.y}l${k.w} -3v${k.h}l${-k.w} 3z`} fill={k.c} />
          ))}
        </g>
        <path d="M480 295L500 255L525 234L555 229L590 231L625 241L645 262L657 290L658 312L650 340L640 352L610 363L568 367L562 397L545 402L540 413L510 419L492 425L482 415L476 385V355L470 350L476 335Z" fill="#0000d0" stroke="#000" strokeWidth="4" strokeLinejoin="round" />
        <path d="M500 255L550 262L585 256L632 262M486 285L550 285L600 278L650 285M480 307H560L620 300L657 305M478 330H570L625 326L652 332M478 352L570 352L640 346M477 370H566M480 392L562 385M484 408L545 400M525 234L515 290L512 400M549 229L548 262L549 350L540 413M580 231L590 262L584 300L592 362M612 237L606 262L625 300L620 360M632 250L640 290L636 352M500 255L486 300L490 420M525 240L560 236L610 242M530 350L526 417M649 275L645 345" fill="none" stroke="#000" strokeWidth="3" />
      </g>
    </Scene>
  );
};

const bracket = [
  ["#00bcd2", "42,220 395,40 418,40 510,88 575,125 610,160 640,205 653,245 656,280 657,452 556,502 555,420 548,400 530,392 490,405 450,430 425,460 417,490 417,573 318,622 291,612 291,450 288,415 275,380 255,345 235,322 180,290 130,262 75,236 60,235 42,244"],
  ["#1058b8", "42,220 395,40 418,40 510,88 520,130 522,165 500,190 440,235 340,265 300,270 255,262 215,255 180,262 178,290 130,262 75,236 60,235 42,244"],
  ["#0e4890", "48,212 395,40 418,42 372,66 112,182 92,208 70,210"],
  ["#1468e8", "42,222 60,212 75,210 90,222 180,262 178,290 130,262 75,236 60,235 42,244"],
  ["#1468e8", "258,258 300,262 345,240 390,222 435,203 480,180 520,148 522,168 500,188 465,212 435,240 370,258 300,272"],
  ["#000078", "112,182 330,78 362,66 362,76 150,184"],
  ["#0000a8", "130,184 362,74 362,90 300,112 210,163 165,190 232,222 215,236 110,228 125,200"],
  ["#0000a8", "358,68 445,62 452,60 445,72 465,85 467,108 440,118 420,135 415,105 385,118 380,90 355,88"],
  ["#0000a8", "270,240 325,236 385,200 400,190 465,152 470,140 492,140 490,152 460,158 430,180 395,205 330,222 325,240 305,249"],
  ["hole", "165,190 210,163 300,112 345,92 382,92 382,118 413,108 418,133 445,122 440,135 462,142 460,156 385,195 330,218 300,233 265,233 232,222"],
  ["#0098ac", "178,262 230,252 268,260 262,275 215,302 180,290"],
  ["#0098ac", "512,92 545,108 528,150 518,148 505,122"],
  ["#20cc98", "205,296 240,266 275,272 345,300 360,345 372,400 372,480 380,530 417,536 417,573 318,622 320,500 280,400 240,322"],
  ["#28f0b0", "268,298 300,290 340,302 360,360 360,402 345,395 325,350 290,310"],
  ["#20cc98", "545,106 580,128 592,165 607,210 614,290 620,400 632,462 556,502 556,465 590,420 606,350 606,300 595,265 580,240 545,190 520,152 530,130"],
  ["#28f0b0", "540,138 575,146 590,180 612,240 616,330 606,300 590,240 545,196 542,160"],
  ["#32e800", "238,297 285,302 335,330 352,380 352,405 330,412 300,350 272,335 250,325"],
  ["#28c800", "326,408 352,400 354,480 345,560 338,612 326,616 334,500"],
  ["#a0f000", "272,335 300,345 340,395 340,445 310,405 290,425 285,380"],
  ["#88c800", "328,430 342,440 335,520 328,617 314,622 320,500"],
  ["#d8b000", "290,425 302,390 330,415 330,460 318,560 312,620 300,618 312,480 291,447"],
  ["#d05800", "291,447 316,450 312,540 305,618 291,612"],
  ["#c80000", "291,470 302,495 302,540 298,614 291,612"],
  ["#32e800", "577,128 605,155 615,200 622,240 628,290 616,295 600,220 585,165"],
  ["#28c800", "614,290 628,290 636,360 645,458 632,462 618,400"],
  ["#a0f000", "611,163 635,200 648,240 620,248 614,200"],
  ["#88c800", "619,248 645,245 640,290 655,450 645,457 634,360"],
  ["#d8b000", "646,240 653,245 655,280 657,450 650,440 640,290"],
  ["#d05800", "653,280 657,280 657,360 654,360"],
  ["#1468e8", "375,372 410,345 500,300 540,272 570,266 586,276 592,310 585,370 556,420 548,400 425,460 417,490 400,490 382,460 375,420"],
  ["#1060c8", "375,385 430,362 500,330 592,300 585,370 556,420 548,400 425,460 417,490 400,490 382,460 375,420"],
  ["#0000a0", "412,410 440,380 490,350 530,340 556,345 556,392 548,400 530,392 490,405 450,430 425,456 414,445"],
  ["#0098b0", "362,395 374,380 378,450 400,490 417,490 417,536 395,536 370,480"],
  ["#0098b0", "556,422 585,370 595,300 606,350 590,420 556,462"],
];
const rays = [[130, 184], [165, 173], [160, 157], [180, 160], [170, 182], [300, 90], [313, 92], [328, 80], [333, 72], [360, 72], [355, 90], [460, 138], [462, 150], [430, 165], [500, 135], [268, 233], [280, 232], [328, 218], [292, 235]];
const BracketScene = () => (
  <Scene viewBox="400 319 513 218" role="img" aria-label="Bracket strain contour">
    <defs>
      <linearGradient id="backdrop" gradientUnits="userSpaceOnUse" x1="0" y1="0" x2="0" y2="654">
        <stop offset="0" stopColor="#2a547e" /><stop offset="1" stopColor="#a4a4a4" />
      </linearGradient>
    </defs>
    <g transform="translate(540 320) scale(.3333)">
      {bracket.map(([c, pts], i) => (
        <polygon key={i} points={pts} fill={c === "hole" ? "url(#backdrop)" : c} />
      ))}
      <path d={rays.map(([x, y]) => `M315 187L${x} ${y}`).join("")} stroke="#c4c4c4" strokeWidth="3.5" />
    </g>
  </Scene>
);

const PlotSvg = styled.svg`
  width: 100%;
  height: 440px;
  display: block;
`;
const PlotText = styled.text`
  font: ${(p) => p.$s || 12}px "Liberation Sans", Arial, sans-serif;
  text-anchor: ${(p) => p.$a || "middle"};
  fill: ${(p) => p.$c || "#000"};
`;
const samples = [[16.1, 0], [18, 2.5], [20, 6.5], [22, 36.3], [24, 16.3], [26, 32.1], [28, 35.5], [30, 24.5], [32, 15.3], [34, 19], [36, 35.5]];
const px = (v) => Math.round(35 + v * 11.75) + 0.5;
const py = (v) => Math.round(405 - v * 9.55) + 0.5;
const Plot = () => {
  const minor = Array.from({ length: 15 }, (_, i) => (i + 1) * 2.5);
  const major = Array.from({ length: 9 }, (_, i) => i * 5);
  return (
    <PlotSvg viewBox="0 0 515 440" role="img" aria-label="Velocity over time">
      <PlotText x="271" y="20" $s={19}>N2 - MAG</PlotText>
      <rect x="35.5" y="23.5" width="470" height="382" fill="#fff" />
      <path d={minor.map((v) => `M${px(v)} 24V405M36 ${py(v)}H505`).join("")} stroke="#c8c8c8" />
      <rect x="35.5" y="23.5" width="470" height="382" fill="none" stroke="#404040" />
      <path d={major.map((v) => `M${px(v)} 406v4M31 ${py(v)}h4`).join("")} stroke="#404040" />
      {major.map((v) => <PlotText key={`x${v}`} x={px(v)} y="421">{v}</PlotText>)}
      {major.map((v) => <PlotText key={`y${v}`} x="31" y={py(v) + 5} $a="end">{v}</PlotText>)}
      <PlotText x="269" y="435" $s={13}>Time</PlotText>
      <PlotText transform="translate(13 215) rotate(-90)" $s={13}>Velocity</PlotText>
      <polyline points={samples.map(([x, y]) => `${px(x)},${py(y)}`).join(" ")} fill="none" stroke="#4a70d0" strokeWidth="1.8" />
      <rect x="389.5" y="26.5" width="113" height="24" fill="#fff" stroke="#000" />
      <path d="M394 39.500h49" stroke="#4a70d0" strokeWidth="1.8" />
      <PlotText x="445" y="43" $a="start" $s={11} $c="#2850c8">N2 - MAG</PlotText>
    </PlotSvg>
  );
};

/* ---------- playback sliders ---------- */
const Sliders = styled.div`
  display: flex;
  flex-direction: column;
  gap: 2px;
  width: 170px;
  margin-left: 1px;
`;
const Slider = styled.input.attrs({ type: "range" })`
  appearance: none;
  display: block;
  width: 100%;
  height: ${(p) => p.$h}px;
  background: #c8c8c8;
  border: 1px solid;
  border-color: #a0a0a0 #fff #fff #a0a0a0;
  &::-webkit-slider-thumb {
    appearance: none;
    width: ${(p) => p.$t}px;
    height: ${(p) => p.$h - 2}px;
    background: linear-gradient(#a0a0a0, #a0a0a0) center / 1px 100% no-repeat, ${FACE};
    border: 1px solid;
    border-color: #fff #696969 #696969 #fff;
  }
`;

/* ---------- contour panel ---------- */
const Panel = styled.section`
  display: flex;
  height: 161px;
  margin: 8px 5px 0 3px;
  padding: 6px 0 4px 2px;
  border-top: 1px solid #a0a0a0;
  border-bottom: 1px solid #696969;
  box-shadow: inset 0 1px 0 #fff, 0 1px 0 #fff;
`;
const Column = styled.div`
  flex: none;
  display: flex;
  flex-direction: column;
  width: ${(p) => p.$w}px;
  padding-right: ${(p) => p.$pr || 0}px;
  padding-left: ${(p) => p.$pl || 0}px;
  border-left: ${(p) => (p.$line ? "1px solid #a0a0a0" : "0")};
`;
const FieldLabel = styled.label`
  flex: none;
  height: ${(p) => p.$h || 18}px;
  line-height: ${(p) => (p.$h > 18 ? p.$h : 16)}px;
  white-space: nowrap;
`;
const Heading = styled.div`
  display: flex;
  justify-content: space-between;
  height: 18px;
  line-height: 16px;
`;
const Line = styled.div`
  display: flex;
  align-items: center;
  justify-content: ${(p) => (p.$between ? "space-between" : "flex-start")};
  gap: ${(p) => p.$gap || 0}px;
  height: 22px;
  margin-bottom: ${(p) => (p.$tight ? 0 : 5)}px;
  padding-left: ${(p) => p.$in || 0}px;
`;
const Push = styled.div`
  display: flex;
  justify-content: flex-end;
  margin-top: auto;
`;
const ButtonStack = styled.div`
  flex: none;
  display: flex;
  flex-direction: column;
  gap: 2px;
  padding-left: 6px;
  margin-bottom: ${(p) => (p.$last ? 0 : 11)}px;
`;
const FirstMark = () => (
  <Ico s={14}><path d="M4 4h3v14H4zM17 4v14l-9-7z" fill="currentColor" /></Ico>
);

/* ---------- console ---------- */
const Console = styled.section`
  flex: 1;
  display: flex;
  min-height: 94px;
  margin: 3px 5px 3px 5px;
  border: 1px solid;
  border-color: #a0a0a0 #fff #fff #a0a0a0;
  background: #fff;
`;
const ConsoleText = styled.div`
  flex: 1;
  padding: 4px 1px;
  font: 12px/15px "Liberation Mono", "Courier New", monospace;
  color: #0000d8;
`;
const Prompt = styled.div`
  color: #a03010;
  padding-left: 1px;
`;
const ScrollTrack = styled.div`
  width: 18px;
  display: flex;
  flex-direction: column;
  justify-content: space-between;
  background: ${FACE};
  border: 1px solid #e0e0e0;
`;
const StatusBar = styled.footer`
  height: 22px;
  padding: 5px 4px 0;
`;

const menus = ["File", "Edit", "View", "Model", "Results", "Annotations", "Tools", "Preferences", "Applications", "Help"];

export default function App() {
  return (
    <Window>
      <GlobalStyle />
      <TitleBar>
        <IconSvg viewBox="0 0 16 16" $s={16} aria-hidden="true"><path d="M2 3L13 2 9 14 7 10H1z" fill="none" stroke="#b81c28" strokeWidth="1.6" /></IconSvg>
        <AppTitle>Untitled - HyperWorks v11.0</AppTitle>
        <Caption>
          <CaptionButton $first aria-label="Minimize"><IconSvg viewBox="0 0 12 12" $s={12}><path d="M1 7h10v3H1z" fill="#fff" stroke="#444" strokeWidth=".6" /></IconSvg></CaptionButton>
          <CaptionButton aria-label="Restore"><IconSvg viewBox="0 0 12 12" $s={12}><path d="M4 4V1.500h7V8H8.500" fill="none" stroke="#fff" strokeWidth="1.4" /><rect x="1.5" y="4" width="6.5" height="6.5" fill="none" stroke="#fff" strokeWidth="2" /></IconSvg></CaptionButton>
          <CaptionButton $close aria-label="Close"><IconSvg viewBox="0 0 12 12" $s={12}><path d="M2 2l8 8M10 2l-8 8" stroke="#533" strokeWidth="3.8" /><path d="M2 2l8 8M10 2l-8 8" stroke="#fff" strokeWidth="2.6" /></IconSvg></CaptionButton>
        </Caption>
      </TitleBar>
      <MenuBar>{menus.map((m) => <MenuLink key={m} href="#">{m}</MenuLink>)}</MenuBar>
      <ToolBar>
        <Grip $first />
        <Tool label="New" icon={icons.newModel} drop />
        <Tool label="Open" icon={icons.open} drop />
        <Tool label="Save" icon={icons.save} drop />
        <Tool label="Import" icon={icons.importM} drop />
        <Tool label="Export" icon={icons.exportM} drop />
        <Divider />
        <Tool label="User profile" icon={icons.person} disabled />
        <Tool label="Open results" icon={icons.folderContour} drop />
        <Grip />
        <Tool label="Previous page" icon={icons.left} disabled />
        <Tool label="Next page" icon={icons.right} disabled />
        <Tool label="Add page" icon={icons.addPage} />
        <Tool label="Delete page" icon={icons.delPage} disabled />
        <Tool label="Page layout" icon={icons.layout} drop />
        <Tool label="Swap windows" icon={icons.swap} />
        <Tool label="Expand window" icon={icons.expand} />
        <Tool label="Synchronize windows" icon={icons.sync} />
        <Grip />
        <Tool label="Cut window" icon={icons.cut} disabled />
        <Tool label="Copy window" icon={icons.copy} drop />
        <Tool label="Paste window" icon={icons.paste} drop disabled />
        <Tool label="Overlay window" icon={icons.overlay} drop disabled />
        <Grip />
        <Tool label="Fit" icon={icons.fit} />
        <Tool label="Previous view" icon={icons.left} disabled />
        <Tool label="XY top" icon={<AxisIcon vc={GREEN} hc={RED} vl="Y" hl="X" />} />
        <Tool label="XY bottom" icon={<AxisIcon top vc={GREEN} hc={RED} vl="Y" hl="X" />} />
        <Tool label="XZ left" icon={<AxisIcon vc={BLUE} hc={RED} vl="Z" hl="X" />} />
        <Tool label="XZ right" icon={<AxisIcon right vc={BLUE} hc={RED} vl="Z" hl="X" />} />
        <Tool label="YZ front" icon={<AxisIcon vc={BLUE} hc={GREEN} vl="Z" hl="Y" />} />
        <Tool label="YZ rear" icon={<AxisIcon right vc={BLUE} hc={GREEN} vl="Z" hl="Y" />} />
        <Tool label="Isometric" icon={icons.iso} />
        <Tool label="Reverse view" icon={icons.reverse} />
        <Tool label="User views" icon={icons.userView} drop disabled />
        <Grip />
        <Tool label="Add report" icon={icons.addReport} />
        <Tool label="Open report" icon={icons.openReport} drop />
        <Tool label="Run report" icon={icons.runReport} />
        <Tool label="Play report" icon={icons.playReport} drop />
        <Divider />
        <Tool label="Add summary" icon={icons.addSum} />
        <Tool label="Open summary" icon={icons.openSum} />
        <Tool label="Run summary" icon={icons.runSum} />
        <Divider />
        <Tool label="Functions" icon={<FunctionMark><b>f</b>()</FunctionMark>} />
      </ToolBar>

      <Workspace>
        <Browser>
          <Tabs role="tablist">
            <Tab role="tab">Session</Tab>
            <Tab role="tab" aria-selected="true" $on>Results</Tab>
          </Tabs>
          <BrowserPane>
            <IconRow $h={29}>
              <Group>
                {modes.map(([l, ic], i) => <ModeButton key={l} type="button" aria-label={l} $on={i === 1}>{ic}</ModeButton>)}
              </Group>
            </IconRow>
            <PickRow $mb={2}>
              <Combo label="Result file" value={"\\Altairwin64\\hw11.0\\tutorials\\mv_hv_hg\\animation\\bezel_iter2.h3d"} />
            </PickRow>
            {["Subcase 3 (Fz_iter2)", "Static Analysis"].map((v) => (
              <PickRow key={v} $mb={3}>
                <Spinner>
                  <SpinButton aria-label="Previous"><Caret $up /></SpinButton>
                  <SpinButton aria-label="Next"><Caret /></SpinButton>
                </Spinner>
                <Combo label={v} value={v} />
              </PickRow>
            ))}
            <IconRow $h={31}>
              <Group>
                <ToolButton aria-label="Check all"><Ico><path d="M2 2v18M2 6h6M2 16h6" stroke="#555" fill="none" strokeWidth="1.2" /><path d="M8 2h8v8H8zM8 12h8v8H8z" fill="#fff" stroke="#444" strokeWidth="1.3" /><path d="M10 6l2 2 3-4M10 16l2 2 3-4" stroke="#222" fill="none" strokeWidth="1.4" /></Ico></ToolButton>
                <ToolButton aria-label="Uncheck all"><Ico><path d="M2 1v17M2 5h6M2 15h6" stroke="#555" fill="none" strokeWidth="1.2" /><path d="M8 1h8v8H8zM8 11h8v8H8z" fill="#fff" stroke="#444" strokeWidth="1.3" /></Ico></ToolButton>
                <ToolButton aria-label="Invert checks"><Ico><path d="M1 2h8v8H1zM12 13h8v8h-8z" fill="#fff" stroke="#444" strokeWidth="1.3" /><path d="M3 6l2 2 3-4" stroke="#222" fill="none" strokeWidth="1.4" /><path d="M11 2q6-1 7 5h3l-5 5-4-5h3q-1-3-4-3zM9 21q-6 0-6-5H0l5-5 4 5H6q0 2 3 3z" fill="#555" /></Ico></ToolButton>
              </Group>
              <Group $gap={3}>
                <Group><Tool label="Entity type" icon={<BlueBox s={20} />} drop /></Group>
                <ToolButton aria-label="Select"><Ico><path d="M7 2v16l4-4 3 7 2.500-1-3-7h5z" fill="#fff" stroke="#111" strokeWidth="1.1" /></Ico></ToolButton>
                <ToolButton aria-label="Send to selection"><Ico><rect x="2" y="12" width="18" height="8" fill="#ffff00" stroke="#30d8f0" strokeWidth="2" /><path d="M9 5q6-1 6 4h3l-4 5-4-5h2q0-3-3-2z" fill="#444" /></Ico></ToolButton>
                <ToolButton aria-label="Show or hide"><EyeIcon text="+/−" /></ToolButton>
                <ToolButton aria-label="Isolate"><EyeIcon text="1" /></ToolButton>
              </Group>
            </IconRow>
            <TreeBox>
              <TreeHead>
                <HeadCell $w={138} $pad>Entities<SortMark>△</SortMark></HeadCell>
                <HeadCell $w={28} aria-label="Info"><Ico s={16}><circle cx="11" cy="10" r="9" fill="#d8dcec" stroke="#8a90a8" /><circle cx="11" cy="5" r="1.8" fill="#1838d0" /><path d="M11 9v7" stroke="#1838d0" strokeWidth="3" /></Ico></HeadCell>
                <HeadCell $w={23}>ID</HeadCell>
                <HeadCell $w={28} aria-label="Color"><ColorWheel s={15} /></HeadCell>
                <HeadCell $w={28} aria-label="Style"><Ico s={16}><path d="M11 2l9 4v10l-9 5-9-5V6z" fill="#7074a8" /><path d="M11 2l9 4-9 5-9-5z" fill="#a8acd6" /><path d="M11 11v10l9-5V6z" fill="#8c90c2" /></Ico></HeadCell>
                <HeadCell $grow aria-label="More" />
              </TreeHead>
              <Tree>
                {treeItems.map(([t, ic], i) => (
                  <TreeRow key={t}>
                    <TreeToggle aria-label={`Expand ${t}`} />
                    <Twig />
                    {ic}
                    <TreeText $wide={i === 0}>{t}</TreeText>
                  </TreeRow>
                ))}
              </Tree>
            </TreeBox>
          </BrowserPane>
        </Browser>

        <Main>
          <PageHeader><span>-1</span><span>1 of 1</span></PageHeader>
          <Graphics>
            <SideBar>
              <HGrip $h={8} />
              {sideTop.map(([l, ic]) => <ToolButton key={l} aria-label={l}>{ic}</ToolButton>)}
              <HGrip $h={14} />
              {sideBottom.map(([l, ic]) => <ToolButton key={l} aria-label={l}>{ic}</ToolButton>)}
            </SideBar>
            <Panes>
              <ViewColumn>
                <Viewport>
                  <BezelScene />
                  <ViewLegend values={["1.258E-08", "1.118E-08", "9.785E-09", "8.387E-09", "6.989E-09", "5.591E-09", "4.193E-09", "2.796E-09", "1.398E-09", "0.000E+00"]} />
                  <Triad viewBox="0 0 90 218">
                    <path d="M13 205V176" stroke="#0010ff" strokeWidth="1.5" />
                    <path d="M13 205l6-4" stroke="#10e020" strokeWidth="3" />
                    <path d="M13 205h16" stroke="#f01010" strokeWidth="1.5" /><path d="M28 202l9 3-9 3z" fill="#f01010" />
                    <TriadText x="12" y="176">Z</TriadText><TriadText x="19" y="201">Y</TriadText><TriadText x="41" y="206">X</TriadText>
                  </Triad>
                </Viewport>
                <Viewport $active>
                  <BracketScene />
                  <ViewLegend values={["1.990E-05", "1.769E-05", "1.548E-05", "1.327E-05", "1.106E-05", "8.845E-06", "6.633E-06", "4.422E-06", "2.211E-06", "7.218E-19"]} />
                  <Triad viewBox="0 0 90 218">
                    <path d="M31 204V184" stroke="#0010ff" strokeWidth="1.5" /><path d="M31 180l3 8h-6z" fill="#0010ff" />
                    <path d="M31 204l-12-6" stroke="#10e020" strokeWidth="1.5" /><path d="M12 194l9 1-3 5z" fill="#10e020" />
                    <path d="M31 204l12-6" stroke="#f01010" strokeWidth="1.5" /><path d="M50 194l-9 1 3 5z" fill="#f01010" />
                    <TriadText x="8" y="194">Y</TriadText><TriadText x="30" y="179">Z</TriadText><TriadText x="51" y="194">X</TriadText>
                  </Triad>
                </Viewport>
              </ViewColumn>
              <Plot />
            </Panes>
          </Graphics>
          <ToolBar $h={30} $in={2}>
            <Grip />
            <Tool label="Result mode" icon={lower.contourSet} drop />
            <Grip />
            <Tool label="Colors" icon={lower.wheel} />
            <Tool label="Wireframe" icon={lower.wire} drop />
            <Tool label="Shaded" icon={lower.solid} drop />
            <Tool label="Parts" icon={lower.parts} />
            <Grip />
            <Tool label="Contour" icon={lower.contour} />
            <Tool label="Iso" icon={lower.vector} />
            <Tool label="Vector" icon={lower.tensor} />
            <Tool label="Tensor" icon={lower.tensorCube} />
            <Tool label="Deformed" icon={lower.deformed} />
            <Tool label="Section cut" icon={lower.iso} />
            <Tool label="Derived results" icon={lower.derived} />
            <Tool label="Streamlines" icon={lower.stream} />
            <Tool label="Tracking" icon={lower.track} />
            <Tool label="Query" icon={lower.info} />
            <Grip />
            <Tool label="Measures" icon={lower.measures} />
            <Tool label="Notes" icon={lower.note} />
            <Tool label="Tracing" icon={lower.sweep} />
            <Tool label="Video overlay" icon={lower.camera} />
            <Grip />
            <Tool label="Animation type" icon={lower.anim} drop />
            <Tool label="First frame" icon={lower.first} />
            <Tool label="Step back" icon={lower.back} />
            <Tool label="Play" icon={lower.play} />
            <Tool label="Step forward" icon={lower.fwd} />
            <Tool label="Last frame" icon={lower.last} />
            <Sliders>
              <Slider $h={11} $t={30} defaultValue={0} aria-label="Current frame" />
              <Slider $h={6} $t={20} defaultValue={100} aria-label="Animation speed" />
            </Sliders>
            <Tool label="Animation settings" icon={lower.gear} />
          </ToolBar>

          <Panel>
            <Column $w={218} $pr={8} $pl={2}>
              <Heading><label htmlFor="rtype">Result type:</label><Button $w={17} $h={16} aria-label="More result types">...</Button></Heading>
              <Line $in={5}><Combo id="rtype" value="Element Strains (2D & 3D) (t)" /></Line>
              <Line $in={5}><Combo label="Component" value="vonMises" /></Line>
              <Line $in={6} $between><label htmlFor="layers">Entity with layers:</label><Combo id="layers" w={113} value="Max" /></Line>
              <CheckLabel $off $in={6}><CheckBox disabled />Use corner data</CheckLabel>
            </Column>
            <Column $w={173} $pr={10} $pl={2}>
              <Heading>Selection:</Heading>
              <Line $in={6}>
                <Button $w={23} $h={22} aria-label="Selection type"><Caret $s={4} /></Button>
                <YellowButton $h={22} $active>Components</YellowButton>
                <Button $w={22} $h={22} aria-label="Reset components"><FirstMark /></Button>
              </Line>
              <FieldLabel $h={23} htmlFor="resolved">Resolved in:</FieldLabel>
              <Line $in={8}><Combo id="resolved" value="Analysis System" /></Line>
              <Line $in={8}>
                <YellowButton $h={22} disabled>System</YellowButton>
                <Button $w={22} $h={22} disabled aria-label="Reset system"><FirstMark /></Button>
              </Line>
              <CheckLabel $off $in={10} $h={14}><CheckBox disabled />Use tracking system</CheckLabel>
            </Column>
            <Column $w={151} $pr={11} $pl={2}>
              <FieldLabel htmlFor="avg">Averaging method:</FieldLabel>
              <Line $in={6}><Combo id="avg" value="Simple" /></Line>
              <Line $in={6} $gap={6} $tight>
                <CheckLabel><CheckBox />Variation &lt;</CheckLabel>
                <NumberBox $w={30} disabled defaultValue="10" aria-label="Variation percent" />
                <span>(%)</span>
              </Line>
              <FieldLabel $h={20} htmlFor="env">Envelope trace plot:</FieldLabel>
              <Line $in={6}><Combo id="env" off value="None" /></Line>
              <Push><Button $w={79} $h={23}>Apply</Button></Push>
            </Column>
            <Column $w={127} $pl={5} $line>
              <FieldLabel as="span" $h={15}>Display options:</FieldLabel>
              <CheckLabel $in={8}><CheckBox defaultChecked />Discrete color</CheckLabel>
              <CheckLabel $in={8} $off><CheckBox disabled />Interpolate colors</CheckLabel>
            </Column>
            <Column $w={127} $pl={6} $pr={9} $line>
              <FieldLabel as="span">Legend threshold:</FieldLabel>
              <Line $in={8} $between><CheckLabel><CheckBox />Max:</CheckLabel><NumberBox disabled defaultValue="0" aria-label="Maximum" /></Line>
              <Line $in={8} $between><CheckLabel><CheckBox />Min:</CheckLabel><NumberBox disabled defaultValue="0" aria-label="Minimum" /></Line>
              <Line $in={4} $between><label htmlFor="mult">Multiplier:</label><NumberBox id="mult" defaultValue="1" /></Line>
              <Line $in={4} $between $tight><label htmlFor="offs">Offset:</label><NumberBox id="offs" defaultValue="0" /></Line>
              <Push><Button $w={85} $h={23}>Edit Legend...</Button></Push>
            </Column>
            <Column $w={160} $pl={5} $line>
              <FieldLabel as="span" $h={14}>Result display control:</FieldLabel>
              <CheckLabel $in={8}><CheckBox />Overlay result display</CheckLabel>
              <ButtonStack>
                <Button $w={101}>Clear Contour</Button>
                <Button $w={101}>Create Plot Style...</Button>
              </ButtonStack>
              <ButtonStack $last>
                <Button $w={101}>Show Iso Value</Button>
                <Button $w={101}>Projection Rule...</Button>
                <Button $w={101}>Query Results...</Button>
              </ButtonStack>
            </Column>
          </Panel>

          <Console>
            <ConsoleText>
              <div>Main console display active (Tcl8.5.6 / Tk8.5.6)</div>
              <Prompt>(Documents) 1 %</Prompt>
            </ConsoleText>
            <ScrollTrack>
              <Button $w={16} $h={16} aria-label="Scroll up"><Caret $up $s={4} $c="#909090" /></Button>
              <Button $w={16} $h={16} aria-label="Scroll down"><Caret $s={4} $c="#909090" /></Button>
            </ScrollTrack>
          </Console>
        </Main>
      </Workspace>
      <StatusBar>0 entities selected</StatusBar>
    </Window>
  );
}
